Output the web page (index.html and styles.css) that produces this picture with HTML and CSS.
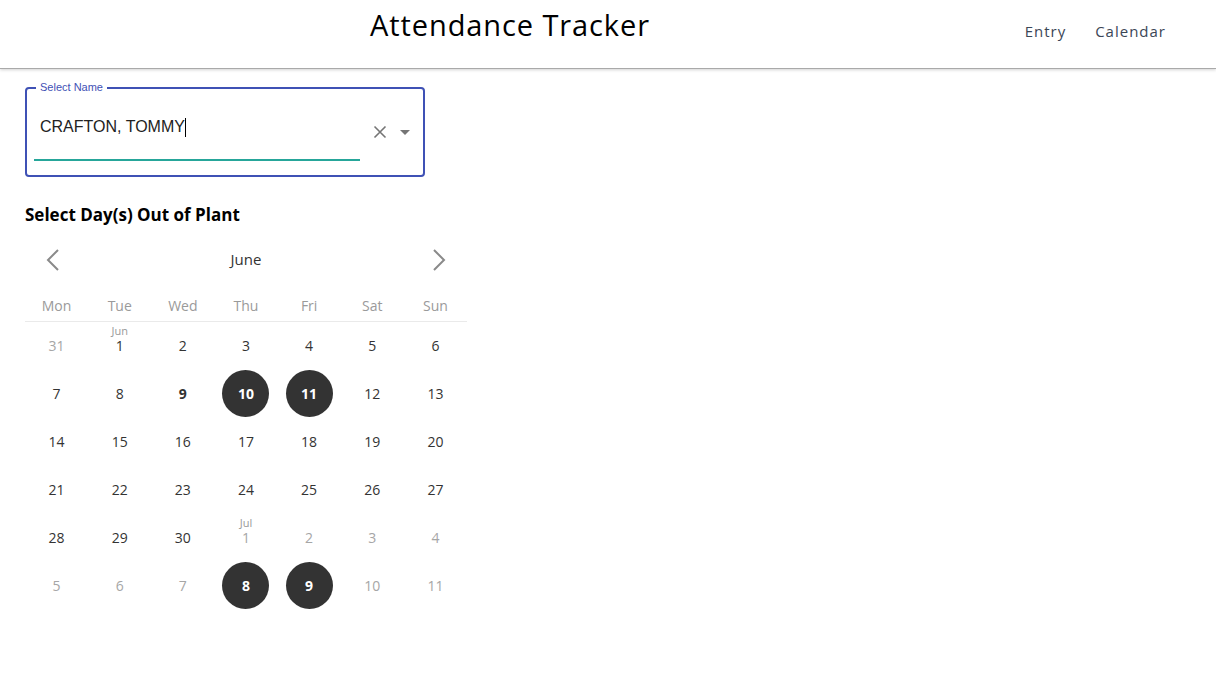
FILE: index.html
```html
<!DOCTYPE html>
<html lang="en">
<head>
<meta charset="utf-8">
<title>Attendance Tracker</title>
<link rel="stylesheet" href="styles.css">
</head>
<body>
<header class="topbar">
  <div class="title-wrap"><h1 class="title">Attendance Tracker</h1></div>
  <nav class="nav">
    <a class="nav-link">Entry</a>
    <a class="nav-link">Calendar</a>
  </nav>
</header>
<main class="main">
  <div class="select-box">
    <span class="select-label">Select Name</span>
    <div class="select-row">
      <div class="select-input">
        <span class="select-value">CRAFTON, TOMMY</span><span class="caret"></span>
      </div>
      <div class="select-icons">
        <svg class="icon-clear" width="14" height="14" viewBox="0 0 14 14"><path d="M1.5 1.5 L12.5 12.5 M12.5 1.5 L1.5 12.5" stroke="#757575" stroke-width="1.6" fill="none"/></svg>
        <svg class="icon-arrow" width="10" height="5" viewBox="0 0 10 5"><path d="M0 0 L10 0 L5 5 Z" fill="#757575"/></svg>
      </div>
    </div>
  </div>

  <h2 class="section-title">Select Day(s) Out of Plant</h2>

  <div class="calendar">
    <div class="cal-nav">
      <button class="cal-arrow"><svg width="14" height="22" viewBox="0 0 14 22"><path d="M12 1 L2 11 L12 21" stroke="#8a8a8a" stroke-width="2" fill="none"/></svg></button>
      <span class="cal-month">June</span>
      <button class="cal-arrow"><svg width="14" height="22" viewBox="0 0 14 22"><path d="M2 1 L12 11 L2 21" stroke="#8a8a8a" stroke-width="2" fill="none"/></svg></button>
    </div>
    <div class="cal-weekdays">
      <span>Mon</span><span>Tue</span><span>Wed</span><span>Thu</span><span>Fri</span><span>Sat</span><span>Sun</span>
    </div>
    <div class="cal-grid">
      <div class="day other"><span class="num">31</span></div>
      <div class="day"><span class="mlabel">Jun</span><span class="num">1</span></div>
      <div class="day"><span class="num">2</span></div>
      <div class="day"><span class="num">3</span></div>
      <div class="day"><span class="num">4</span></div>
      <div class="day"><span class="num">5</span></div>
      <div class="day"><span class="num">6</span></div>

      <div class="day"><span class="num">7</span></div>
      <div class="day"><span class="num">8</span></div>
      <div class="day today"><span class="num">9</span></div>
      <div class="day selected"><span class="num">10</span></div>
      <div class="day selected"><span class="num">11</span></div>
      <div class="day"><span class="num">12</span></div>
      <div class="day"><span class="num">13</span></div>

      <div class="day"><span class="num">14</span></div>
      <div class="day"><span class="num">15</span></div>
      <div class="day"><span class="num">16</span></div>
      <div class="day"><span class="num">17</span></div>
      <div class="day"><span class="num">18</span></div>
      <div class="day"><span class="num">19</span></div>
      <div class="day"><span class="num">20</span></div>

      <div class="day"><span class="num">21</span></div>
      <div class="day"><span class="num">22</span></div>
      <div class="day"><span class="num">23</span></div>
      <div class="day"><span class="num">24</span></div>
      <div class="day"><span class="num">25</span></div>
      <div class="day"><span class="num">26</span></div>
      <div class="day"><span class="num">27</span></div>

      <div class="day"><span class="num">28</span></div>
      <div class="day"><span class="num">29</span></div>
      <div class="day"><span class="num">30</span></div>
      <div class="day other"><span class="mlabel">Jul</span><span class="num">1</span></div>
      <div class="day other"><span class="num">2</span></div>
      <div class="day other"><span class="num">3</span></div>
      <div class="day other"><span class="num">4</span></div>

      <div class="day other"><span class="num">5</span></div>
      <div class="day other"><span class="num">6</span></div>
      <div class="day other"><span class="num">7</span></div>
      <div class="day selected"><span class="num">8</span></div>
      <div class="day selected"><span class="num">9</span></div>
      <div class="day other"><span class="num">10</span></div>
      <div class="day other"><span class="num">11</span></div>
    </div>
  </div>
</main>
</body>
</html>
```

FILE: styles.css
```css
* { box-sizing: border-box; }

body {
  margin: 0;
  background: #fff;
  font-family: "Open Sans", "Noto Sans", sans-serif;
  color: #000;
}

.topbar {
  height: 69px;
  display: grid;
  grid-template-columns: 1020px 1fr;
  border-bottom: 1px solid #a9a9a9;
  box-shadow: 0 1px 3px rgba(0,0,0,0.18);
}

.title-wrap {
  display: flex;
  justify-content: center;
}

.title {
  margin: 0;
  padding-top: 4px;
  font-weight: 400;
  font-size: 29px;
  letter-spacing: 0.9px;
  line-height: 42px;
  color: #000;
}

.nav {
  display: flex;
  justify-content: flex-end;
  align-items: flex-start;
  gap: 29px;
  padding-right: 50px;
  padding-top: 20px;
}

.nav-link {
  font-size: 15px;
  letter-spacing: 1px;
  color: #3b4656;
  line-height: 22px;
}

.main {
  padding: 18px 25px 0 25px;
}

.select-box {
  position: relative;
  width: 400px;
  height: 90px;
  border: 2px solid #3f51b5;
  border-radius: 4px;
  padding: 24px 0 0 7px;
}

.select-label {
  position: absolute;
  top: -9px;
  left: 9px;
  padding: 0 4px;
  background: #fff;
  font-family: "Liberation Sans", Arial, sans-serif;
  font-size: 11px;
  line-height: 14px;
  color: #3f51b5;
}

.select-row {
  display: flex;
  align-items: flex-start;
}

.select-input {
  width: 326px;
  height: 48px;
  border-bottom: 2px solid #26a69a;
  padding-left: 6px;
  display: flex;
  align-items: flex-start;
  padding-top: 3px;
}

.select-value {
  font-family: "Liberation Sans", Arial, sans-serif;
  font-size: 16px;
  line-height: 22px;
  color: #222;
}

.caret {
  display: inline-block;
  width: 1px;
  height: 19px;
  margin-top: 2px;
  background: #000;
}

.select-icons {
  display: flex;
  align-items: center;
  gap: 13px;
  padding-left: 13px;
  padding-top: 12px;
}

.section-title {
  margin: 26px 0 0 0;
  font-size: 17px;
  font-weight: 700;
  line-height: 24px;
  color: #000;
}

.calendar {
  width: 442px;
  margin-top: 8px;
}

.cal-nav {
  height: 50px;
  display: flex;
  align-items: center;
  justify-content: space-between;
  padding: 0 20px 0 20px;
}

.cal-arrow {
  border: 0;
  background: transparent;
  padding: 0;
  width: 16px;
  height: 24px;
  display: flex;
  align-items: center;
  justify-content: center;
}

.cal-month {
  font-size: 15px;
  line-height: 20px;
  color: #333;
  margin-bottom: 2px;
}

.cal-weekdays {
  display: grid;
  grid-template-columns: repeat(7, 1fr);
  height: 37px;
  padding-top: 10px;
  border-bottom: 1px solid #eaeaea;
  font-size: 14px;
  line-height: 22px;
  color: #9a9a9a;
  text-align: center;
}

.cal-grid {
  display: grid;
  grid-template-columns: repeat(7, 1fr);
  grid-auto-rows: 48px;
}

.day {
  position: relative;
  display: flex;
  align-items: center;
  justify-content: center;
  padding-bottom: 1px;
  font-size: 14px;
  line-height: 14px;
  color: #333;
}

.day .num {
  width: 47px;
  height: 47px;
  border-radius: 50%;
  display: flex;
  align-items: center;
  justify-content: center;
}

.day.other { color: #a6a6a6; }

.day.today { font-weight: 700; }

.day.selected .num {
  background: #333;
  color: #fff;
  font-weight: 700;
}

.mlabel {
  position: absolute;
  top: 3px;
  left: 0;
  right: 0;
  text-align: center;
  font-size: 11px;
  line-height: 11px;
  color: #999;
}
```
